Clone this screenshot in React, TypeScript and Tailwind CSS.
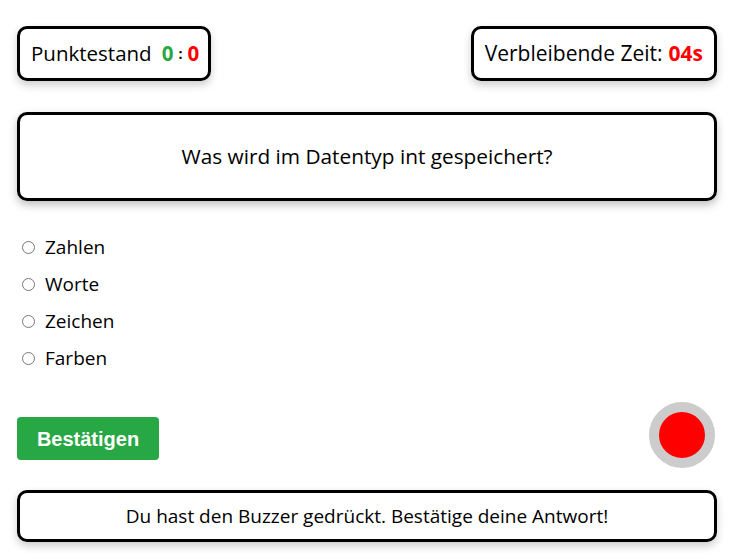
import { useState } from 'react';

const options = ['Zahlen', 'Worte', 'Zeichen', 'Farben'];

export default function App() {
  const [answer, setAnswer] = useState<string | null>(null);

  return (
    <div className="w-[734px] h-[560px] bg-white px-[17px] pt-[26px] text-black" style={{ fontFamily: '"Open Sans", "Noto Sans", sans-serif' }}>
      {/* Kopfzeile */}
      <div className="flex justify-between items-start">
        <div className="w-[194px] h-[55px] flex items-center px-[11px] border-[3px] border-black rounded-[10px] shadow-[0_4px_8px_rgba(0,0,0,0.2)] text-[20.5px] whitespace-nowrap">
          <span>Punktestand</span>
          <span className="ml-[10px] font-bold text-[#28a745]">0</span>
          <span className="mx-[5px] font-bold text-[14px]">:</span>
          <span className="font-bold text-[#ff0000]">0</span>
        </div>
        <div className="h-[55px] flex items-center px-[11px] border-[3px] border-black rounded-[10px] shadow-[0_4px_8px_rgba(0,0,0,0.2)] text-[21px] whitespace-nowrap">
          <span>Verbleibende Zeit:</span>
          <span className="ml-[6px] font-bold text-[#ff0000]">04s</span>
        </div>
      </div>

      {/* Frage */}
      <div className="mt-[31px] h-[89px] flex items-center justify-center border-[3px] border-black rounded-[10px] shadow-[0_4px_8px_rgba(0,0,0,0.25)] text-[20.8px]">
        Was wird im Datentyp int gespeichert?
      </div>

      {/* Antworten */}
      <div className="mt-[34px] flex flex-col gap-[13px] pl-[5px]">
        {options.map((o) => (
          <label key={o} className="flex items-center h-[24px] text-[19px] cursor-pointer">
            <input
              type="radio"
              name="answer"
              checked={answer === o}
              onChange={() => setAnswer(o)}
              className="w-[13px] h-[13px] m-0"
            />
            <span className="ml-[10px]">{o}</span>
          </label>
        ))}
      </div>

      {/* Aktionen */}
      <div className="mt-[47px] flex justify-between items-start">
        <button className="w-[142px] h-[43px] bg-[#28a745] text-white font-bold text-[20px] rounded-[4px]" style={{ fontFamily: '"Liberation Sans", Arial, sans-serif' }}>
          Bestätigen
        </button>
        <div className="-mt-[15px] mr-[2px] w-[66px] h-[66px] rounded-full bg-[#ff0000] border-[10px] border-[#cccccc]" />
      </div>

      {/* Meldung */}
      <div className="mt-[22px] h-[52px] flex items-center justify-center border-[3px] border-black rounded-[10px] shadow-[0_4px_8px_rgba(0,0,0,0.2)] text-[19px]">
        Du hast den Buzzer gedrückt. Bestätige deine Antwort!
      </div>
    </div>
  );
}
